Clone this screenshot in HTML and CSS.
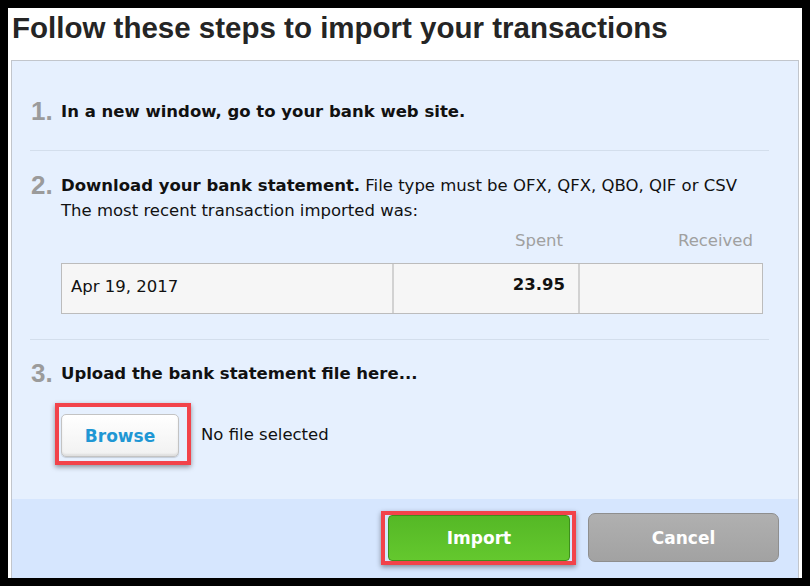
FILE: index.html
```html
<!DOCTYPE html>
<html>
<head>
<meta charset="utf-8">
<link rel="stylesheet" href="styles.css">
</head>
<body>
<div class="frame">
  <h1 class="title">Follow these steps to import your transactions</h1>
  <div class="panel">
    <div class="steps">
      <div class="step step1">
        <span class="num">1.</span>
        <div class="stext"><b>In a new window, go to your bank web site.</b></div>
      </div>
      <div class="step step2">
        <span class="num">2.</span>
        <div class="stext">
          <div><b>Download your bank statement.</b> File type must be OFX, QFX, QBO, QIF or CSV</div>
          <div>The most recent transaction imported was:</div>
          <div class="thead">
            <span class="hdate"></span>
            <span class="hcol">Spent</span>
            <span class="hcol">Received</span>
          </div>
          <div class="trow">
            <span class="cdate">Apr 19, 2017</span>
            <span class="camt">23.95</span>
            <span class="camt"></span>
          </div>
        </div>
      </div>
      <div class="step step3">
        <span class="num">3.</span>
        <div class="stext">
          <div><b>Upload the bank statement file here...</b></div>
          <div class="upload">
            <span class="hl hl-browse"><button class="browse">Browse</button></span>
            <span class="nofile">No file selected</span>
          </div>
        </div>
      </div>
    </div>
    <div class="footer">
      <span class="hl hl-import"><button class="btn import">Import</button></span>
      <button class="btn cancel">Cancel</button>
    </div>
  </div>
</div>
</body>
</html>
```
FILE: styles.css
```css
html { background: #000; }
body { margin: 0; padding: 8px; background: #000; }
.frame {
  background: #fff;
  height: 570px;
  display: flex;
  flex-direction: column;
  box-sizing: border-box;
  padding: 0 3px;
}
.title {
  margin: 0;
  height: 52px;
  padding-top: 3px;
  box-sizing: border-box;
  font-family: "Liberation Sans", Arial, sans-serif;
  font-weight: bold;
  font-size: 29.5px;
  color: #252525;
  padding-left: 1px;
}
.panel {
  flex: 1;
  background: #e6f0fe;
  border: 1px solid #c2c6cc;
  border-bottom: none;
  display: flex;
  flex-direction: column;
  font-family: "DejaVu Sans", Verdana, sans-serif;
  font-size: 16.5px;
  color: #111;
}
.steps { flex: 1; padding: 0 29px 0 18px; }
.step {
  display: flex;
  align-items: flex-start;
  border-bottom: 1px solid #d3deec;
}
.num {
  width: 31px;
  margin-left: 1px;
  margin-right: -1px;
  font-family: "Liberation Sans", Arial, sans-serif;
  font-weight: bold;
  font-size: 26px;
  color: #9b9b9b;
  line-height: 25px;
}
.stext { flex: 1; line-height: 25px; }
.step1 { padding: 38px 0 0; height: 90px; box-sizing: border-box; }
.step2 { padding: 22px 0 25px; }
.step3 { padding: 21px 0 0; border-bottom: none; }
.stext b { font-weight: bold; }
.thead {
  display: grid;
  grid-template-columns: 330px 186px 186px;
  width: 702px;
  margin-top: 5px;
}
.hcol { text-align: right; padding-right: 14px; color: #a0a0a0; }
.hcol:last-child { padding-right: 10px; }
.trow {
  display: grid;
  grid-template-columns: 330px 186px 1fr;
  width: 702px;
  margin-top: 10px;
  border: 1px solid #bcbcbc;
  background: #f6f6f6;
  height: 51px;
  box-sizing: border-box;
}
.trow span { border-left: 2px solid #d2d2d2; padding: 0 13px; line-height: 42px; }
.trow span:first-child { border-left: none; padding-left: 9px; line-height: 45px; }
.camt { text-align: right; font-weight: bold; }
.upload {
  display: flex;
  align-items: center;
  margin-top: 17px;
  margin-left: -6px;
}
.hl {
  display: inline-block;
  border: 4px solid #f2434a;
  box-shadow: 0 2px 5px rgba(0,0,0,0.4);
}
.hl-browse { padding: 7px 8px 4px 2px; }
.browse {
  width: 118px;
  height: 43px;
  border: 1px solid #c3c3c3;
  border-radius: 5px;
  background: linear-gradient(#ffffff, #f1f1f1);
  box-shadow: inset 0 -2px 2px rgba(0,0,0,0.08), 0 1px 1px rgba(0,0,0,0.15);
  font-family: "DejaVu Sans", Verdana, sans-serif;
  font-weight: bold;
  font-size: 17px;
  color: #1f97d4;
  display: block;
  padding: 0;
}
.nofile { margin-left: 10px; }
.footer {
  height: 79px;
  background: #d6e6fe;
  display: flex;
  align-items: flex-start;
  justify-content: flex-end;
  padding: 14px 19px 0 0;
  box-sizing: border-box;
  gap: 12px;
}
.btn {
  display: block;
  width: 191px;
  height: 49px;
  border-radius: 7px;
  font-family: "DejaVu Sans", Verdana, sans-serif;
  font-weight: bold;
  font-size: 17px;
  color: #fff;
  border: 1px solid #888;
  padding: 0;
}
.hl-import { padding: 0 2px 0 3px; margin-top: -2px; }
.import {
  width: 182px;
  height: 46px;
  background: linear-gradient(#55b826, #64c82e);
  border-color: #3e8e1c;
  border-radius: 4px;
}
.cancel {
  background: linear-gradient(#b0b0b0, #a2a2a2);
  border-color: #8e8e8e;
}
```
